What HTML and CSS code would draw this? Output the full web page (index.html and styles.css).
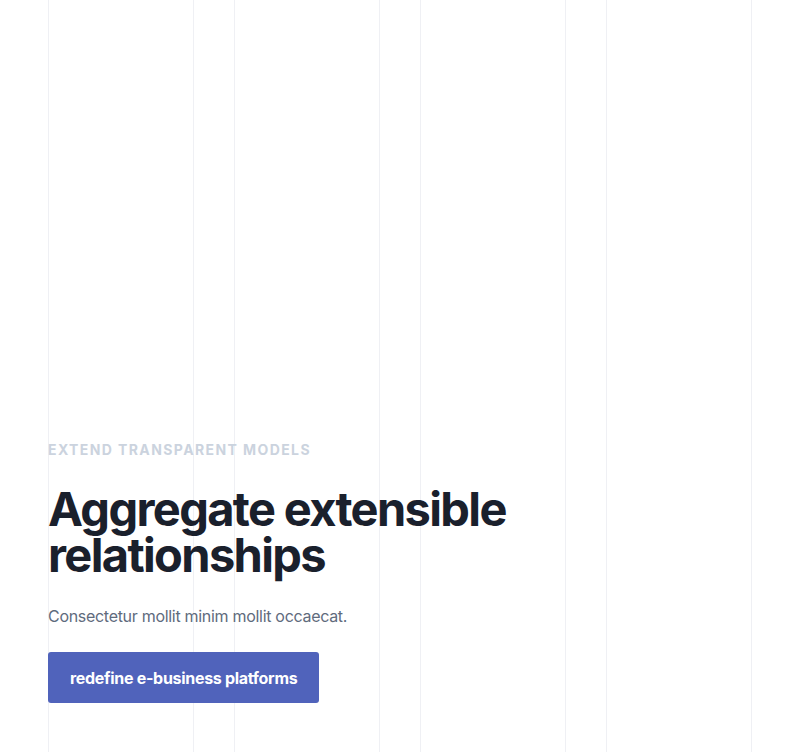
FILE: index.html
```html
<!DOCTYPE html>
<html lang="en">
<head>
<meta charset="utf-8">
<title>Hero</title>
<link rel="stylesheet" href="styles.css">
</head>
<body>
<section class="hero">
  <div class="grid-lines" aria-hidden="true">
    <div class="col"></div>
    <div class="col"></div>
    <div class="col"></div>
    <div class="col"></div>
  </div>
  <div class="content">
    <p class="eyebrow">Extend transparent models</p>
    <h1 class="title">Aggregate extensible relationships</h1>
    <p class="lead">Consectetur mollit minim mollit occaecat.</p>
    <a class="btn" href="#">redefine e-business platforms</a>
  </div>
</section>
</body>
</html>
```
FILE: styles.css
```css
* { box-sizing: border-box; }
html, body { margin: 0; padding: 0; background: #fff; }
body { font-family: Inter, "Noto Sans", sans-serif; }

.hero {
  position: relative;
  height: 752px;
  padding: 0 48px 49px;
  display: flex;
  flex-direction: column;
  justify-content: flex-end;
  overflow: hidden;
}

.grid-lines {
  position: absolute;
  top: 0; bottom: 0; left: 48px; right: 48px;
  display: grid;
  grid-template-columns: repeat(4, 1fr);
  column-gap: 40px;
  z-index: 0;
}
.col {
  border-left: 1px solid #eff0f4;
  border-right: 1px solid #eff0f4;
}

.content {
  position: relative;
  z-index: 1;
  display: flex;
  flex-direction: column;
  align-items: flex-start;
}

.eyebrow {
  margin: 0;
  font-size: 14px;
  line-height: 20px;
  font-weight: 700;
  letter-spacing: 0.1em;
  text-transform: uppercase;
  color: #cbd3de;
}

.title {
  margin: 26px 0 0;
  font-size: 47px;
  line-height: 46px;
  font-weight: 700;
  letter-spacing: -0.035em;
  color: #1a202c;
  max-width: 500px;
}

.lead {
  margin: 26px 0 0;
  font-size: 16px;
  line-height: 24px;
  letter-spacing: -0.3px;
  color: #5f6b7d;
}

.btn {
  margin-top: 24px;
  display: inline-block;
  background: #5063bb;
  color: #fff;
  text-decoration: none;
  font-weight: 700;
  font-size: 16px;
  line-height: 24px;
  letter-spacing: -0.3px;
  padding: 14px 22px 13px;
  border-radius: 3px;
}
```
